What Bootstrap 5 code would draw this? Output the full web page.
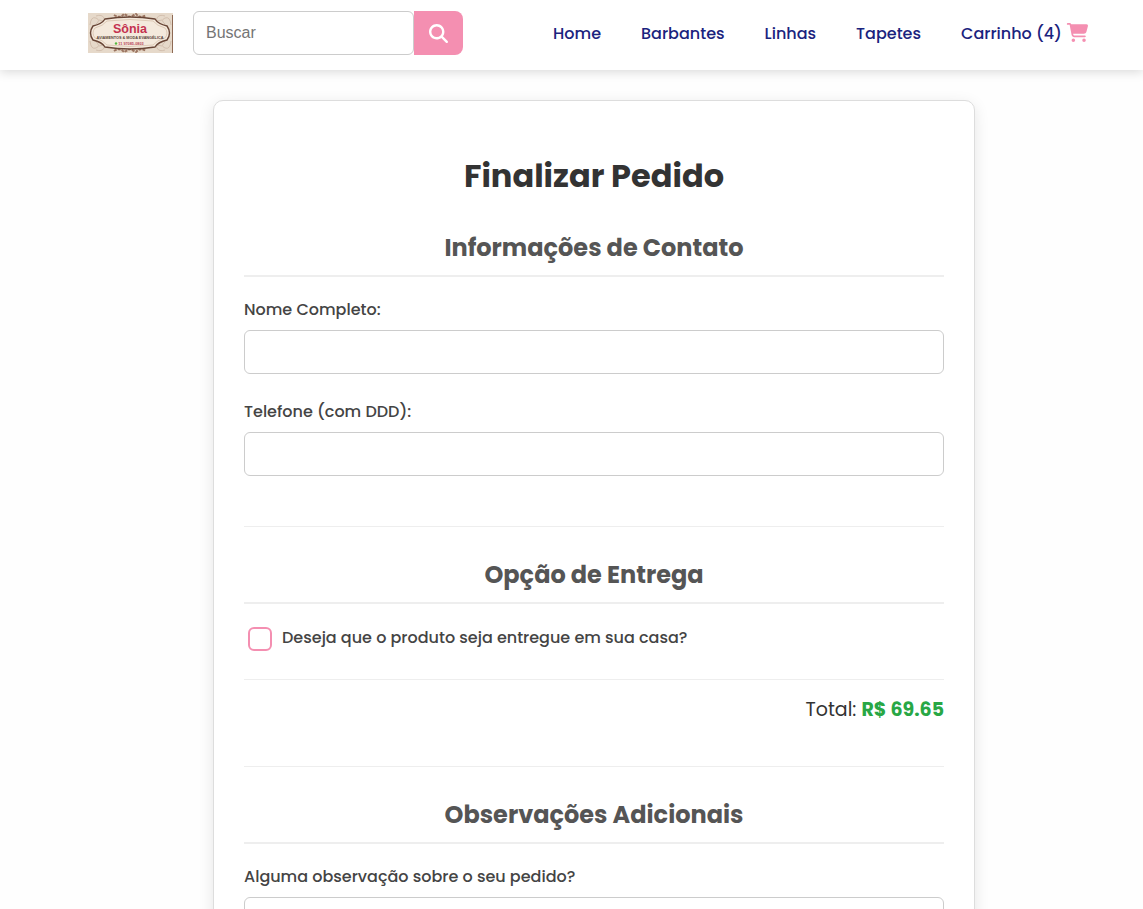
<!DOCTYPE html>
<html lang="pt-BR">
<head>
<meta charset="utf-8">
<meta name="viewport" content="width=device-width, initial-scale=1">
<title>Finalizar Pedido</title>
<link href="https://cdn.jsdelivr.net/npm/bootstrap@5.3.0/dist/css/bootstrap.min.css" rel="stylesheet">
<style>
  body { font-family: Poppins, Inter, sans-serif; color: #333; background: #fefefe; }
  .site-header { background: #fff; min-height: 70px; padding: 0 54px 0 88px; box-shadow: 0 2px 10px rgba(0,0,0,.15); }
  .site-search { width: 270px; height: 44px; margin: -4px 0 0 20px; }
  .site-search .form-control { font-family: "Liberation Sans", sans-serif; border: 1px solid #ccc; border-radius: 6px !important; padding: 0 12px; color: #333; }
  .site-search .form-control::placeholder { color: #757575; }
  .site-search .btn { width: 49px; background: #f48fb1; border: 0; border-radius: 0 8px 8px 0; padding: 0; margin-left: 0 !important; }
  .site-nav { gap: 40px; margin-bottom: 2px; }
  .site-nav .nav-link { color: #1a237e; font-weight: 500; padding: 0; }
  .page-main { padding: 30px 16px 30px 61px; }
  .checkout { max-width: 762px; border: 1px solid #ddd; border-radius: 10px; padding: 30px; box-shadow: 0 4px 15px rgba(0,0,0,.1); background: #fff; }
  .checkout h1 { font-size: 32px; line-height: 48px; font-weight: 700; color: #333; margin: 21px 0 30px; }
  .checkout h2 { font-size: 24px; line-height: 36px; font-weight: 700; color: #555; border-bottom: 2px solid #eee; padding-bottom: 9px; margin-bottom: 20px; }
  .checkout .form-label { display: block; font-weight: 500; line-height: 25px; color: #444; margin-bottom: 8px; }
  .checkout .form-control { border: 1px solid #ccc; border-radius: 6px; min-height: 44px; }
  .field { margin-bottom: 25px; }
  .block-end { border-bottom: 1px solid #eee; padding-bottom: 25px; margin-bottom: 30px; }
  .delivery { gap: 10px; padding: 3px 0 28px 4px; border-bottom: 1px solid #eee; }
  .delivery .form-check-input { width: 24px; height: 24px; margin: 0; border: 2px solid #f48fb1; border-radius: 6px; }
  .delivery .form-check-input:checked { background-color: #f48fb1; }
  .delivery label { font-weight: 500; line-height: 22px; color: #444; }
  .order-total { font-size: 19px; line-height: 30px; padding: 15px 0 16px; }
  .order-total strong { color: #28a745; }
</style>
</head>
<body>
<header class="site-header d-flex align-items-center justify-content-between">
  <div class="d-flex align-items-center">
    <a href="#" class="d-block mb-1" aria-label="Sônia">
      <svg class="d-block" width="85" height="40" viewBox="0 0 85 40">
        <rect width="85" height="40" fill="#e6d9ca"/>
        <g fill="none" stroke="#d3bfae" stroke-width="1">
          <path d="M2 12q1-9 6-7t0 6M8 3q6-2 8 2t-5 2M83 12q-1-9-6-7t0 6M77 3q-6-2-8 2t5 2M2 28q1 9 6 7t0-6M8 37q6 2 8-2t-5-2M83 28q-1 9-6 7t0-6M77 37q-6 2-8-2t5-2"/>
        </g>
        <path d="M26 2q6 4 10-1l6 3 6-3q4 5 10 1M26 38q6-4 10 1l6-3 6 3q4-5 10-1" fill="none" stroke="#9b7460" stroke-width="2" stroke-dasharray="3 1"/>
        <path d="M17 6Q42 2 67 6Q70 11 79 13Q84 20 79 27Q70 29 67 34Q42 38 17 34Q14 29 5 27Q0 20 5 13Q14 11 17 6Z" fill="#f4e9dc" stroke="#684536" stroke-width="1.4"/>
        <path d="M19 8Q42 5 65 8Q69 13 77 15Q81 20 77 25Q69 27 65 32Q42 35 19 32Q15 27 7 25Q3 20 7 15Q15 13 19 8Z" fill="none" stroke="#cfb59e" stroke-width=".6"/>
        <text x="42" y="20" text-anchor="middle" font-family="Liberation Sans, sans-serif" font-size="12.500" font-weight="700" fill="#c43250">Sônia</text>
        <text x="42" y="26" text-anchor="middle" font-family="Liberation Sans, sans-serif" font-size="3.800" font-weight="700" fill="#574338">AVIAMENTOS &amp; MODA EVANGÉLICA</text>
        <circle cx="28" cy="30.500" r="1.200" fill="#55b83e"/>
        <text x="43" y="32" text-anchor="middle" font-family="Liberation Sans, sans-serif" font-size="3.800" font-weight="700" fill="#b94558">11 97085-0803</text>
        <path d="M84.500 2v38" stroke="#8e6a55"/>
      </svg>
    </a>
    <form class="site-search input-group flex-nowrap" role="search">
      <input class="form-control" type="search" placeholder="Buscar" aria-label="Buscar">
      <button class="btn d-flex align-items-center justify-content-center" type="button" aria-label="Buscar">
        <svg width="19" height="19" viewBox="0 0 512 512" fill="#fff" aria-hidden="true"><path d="M416 208c0 45.900-14.900 88.300-40 122.700L502.600 457.400c12.500 12.500 12.500 32.800 0 45.300s-32.800 12.500-45.300 0L330.700 376c-34.400 25.200-76.800 40-122.700 40C93.100 416 0 322.900 0 208S93.100 0 208 0S416 93.100 416 208zM208 352a144 144 0 1 0 0-288 144 144 0 1 0 0 288z"/></svg>
      </button>
    </form>
  </div>
  <nav class="site-nav nav flex-nowrap">
    <a class="nav-link" href="#">Home</a>
    <a class="nav-link" href="#">Barbantes</a>
    <a class="nav-link" href="#">Linhas</a>
    <a class="nav-link" href="#">Tapetes</a>
    <a class="nav-link d-flex align-items-center text-nowrap" href="#">Carrinho (4)
      <svg class="ms-1 mb-1" width="23" height="19" viewBox="0 0 576 512" fill="#f48fb1" aria-hidden="true"><path d="M0 24C0 10.700 10.700 0 24 0H69.500c22 0 41.500 12.800 50.600 32h411c26.300 0 45.500 25 38.600 50.400l-41 152.300c-8.500 31.400-37 53.300-69.500 53.300H170.700l5.400 28.500c2.200 11.300 12.100 19.500 23.600 19.500H488c13.300 0 24 10.700 24 24s-10.700 24-24 24H199.700c-34.600 0-64.300-24.600-70.700-58.500L77.400 54.500c-.7-3.800-4-6.500-7.900-6.500H24C10.700 48 0 37.300 0 24zM128 464a48 48 0 1 1 96 0 48 48 0 1 1-96 0zm336-48a48 48 0 1 1 0 96 48 48 0 1 1 0-96z"/></svg>
    </a>
  </nav>
</header>

<main class="page-main">
  <form class="checkout mx-auto">
    <h1 class="text-center">Finalizar Pedido</h1>

    <section class="block-end">
      <h2 class="text-center">Informações de Contato</h2>
      <div class="field">
        <label class="form-label" for="nome">Nome Completo:</label>
        <input class="form-control" type="text" id="nome">
      </div>
      <div class="field">
        <label class="form-label" for="telefone">Telefone (com DDD):</label>
        <input class="form-control" type="tel" id="telefone">
      </div>
    </section>

    <section class="block-end">
      <h2 class="text-center">Opção de Entrega</h2>
      <div class="delivery d-flex">
        <input class="form-check-input" type="checkbox" id="entrega">
        <label for="entrega">Deseja que o produto seja entregue em sua casa?</label>
      </div>
      <div class="order-total text-end">Total: <strong>R$ 69.65</strong></div>
    </section>

    <section>
      <h2 class="text-center">Observações Adicionais</h2>
      <label class="form-label" for="obs">Alguma observação sobre o seu pedido?</label>
      <textarea class="form-control" id="obs" rows="4"></textarea>
    </section>
  </form>
</main>
<script src="https://cdn.jsdelivr.net/npm/bootstrap@5.3.0/dist/js/bootstrap.bundle.min.js"></script>
</body>
</html>
